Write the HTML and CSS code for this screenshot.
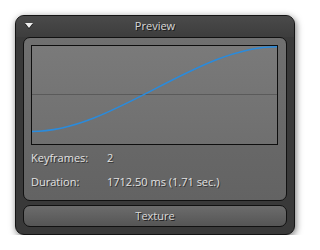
FILE: index.html
```html
<!DOCTYPE html>
<html>
<head>
<meta charset="utf-8">
<link rel="stylesheet" href="styles.css">
</head>
<body>
<div class="panel">
  <div class="header">
    <span class="tri"></span>
    <span class="title">Preview</span>
  </div>
  <div class="inner">
    <div class="graph">
      <svg class="curve" width="245" height="98" viewBox="0 0 245 98">
        <line x1="0" y1="48.5" x2="245" y2="48.5" stroke="#5a5a5a" stroke-width="1"/>
        <path d="M0,85.5 C81.7,85.5 163.3,0.8 245,0.8" fill="none" stroke="#2a8bdc" stroke-width="1.6"/>
      </svg>
    </div>
    <div class="row"><span class="label">Keyframes:</span><span class="value">2</span></div>
    <div class="row"><span class="label">Duration:</span><span class="value">1712.50 ms (1.71 sec.)</span></div>
  </div>
  <div class="button">Texture</div>
</div>
</body>
</html>
```
FILE: styles.css
```css
html, body {
  margin: 0;
  padding: 0;
  background: #ffffff;
}
body {
  padding: 15px 0 0 15px;
  font-family: "Open Sans", "DejaVu Sans", sans-serif;
  font-size: 11px;
}
.panel {
  box-sizing: border-box;
  width: 280px;
  height: 220px;
  border: 1px solid #141414;
  border-radius: 9px;
  background: #393939;
  padding: 0 7px 7px 7px;
  box-shadow: 1px 2px 7px rgba(0,0,0,0.55);
  display: flex;
  flex-direction: column;
}
.header {
  position: relative;
  height: 21px;
  margin: 0 -7px;
  border-radius: 8px 8px 0 0;
  background: linear-gradient(#4a4a4a, #3d3d3d);
  display: flex;
  align-items: center;
  justify-content: center;
}
.tri {
  position: absolute;
  left: 9px;
  top: 7px;
  width: 0;
  height: 0;
  border-left: 4.5px solid transparent;
  border-right: 4.5px solid transparent;
  border-top: 5px solid #f0f0f0;
  filter: drop-shadow(0 1px 0 #111);
}
.title, .button {
  color: #d8d8d8;
  text-shadow: 1px 1px 0 #1a1a1a;
}
.title {
  line-height: 21px;
  margin-top: -3px;
}
.inner {
  box-sizing: border-box;
  height: 164px;
  border: 1px solid #111;
  border-radius: 7px;
  background: linear-gradient(#707070, #636363);
  padding: 7px 7px 0 7px;
}
.graph {
  box-sizing: border-box;
  width: 247px;
  height: 100px;
  border: 1px solid #0e0e0e;
  background: linear-gradient(#7a7a7a, #6f6f6f);
}
.curve {
  display: block;
}
.row {
  height: 24px;
  display: flex;
  align-items: center;
  color: #e2e2e2;
  text-shadow: 1px 1px 0 #333;
}
.row:first-of-type {
  margin-top: 1px;
}
.label {
  width: 76px;
}
.button {
  box-sizing: border-box;
  margin-top: 4px;
  height: 22px;
  border: 1px solid #111;
  border-radius: 7px;
  background: linear-gradient(#6c6c6c, #555555);
  text-align: center;
  line-height: 19px;
}
```
